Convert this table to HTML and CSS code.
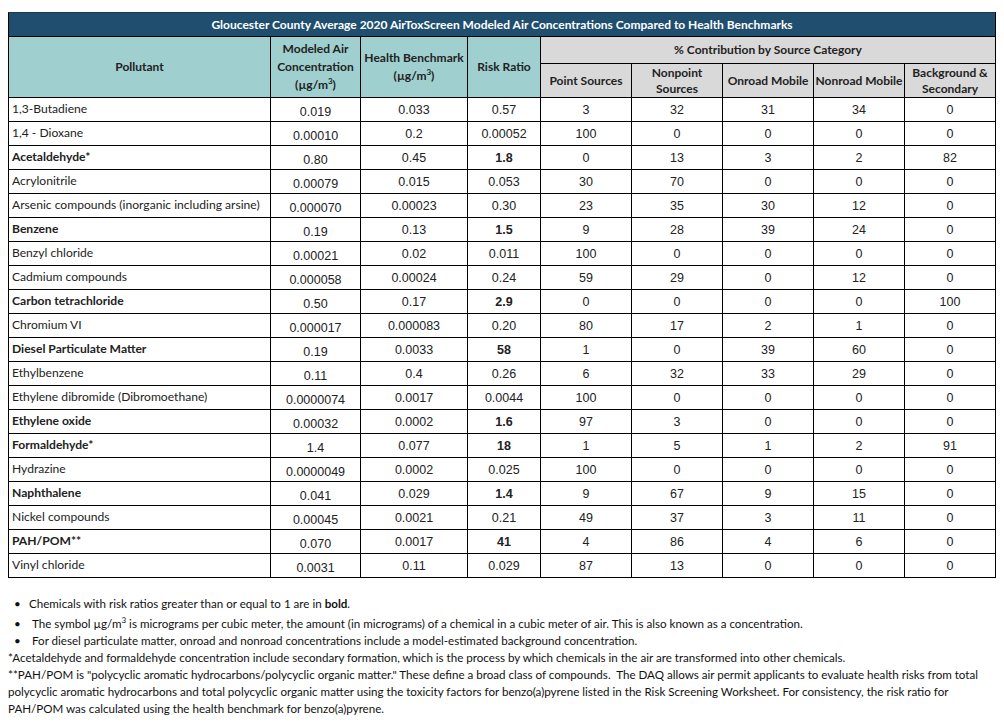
FILE: index.html
```html
<!DOCTYPE html>
<html>
<head>
<meta charset="utf-8">
<link rel="stylesheet" href="styles.css">
</head>
<body>
<table class="tox">
  <colgroup>
    <col class="c-name"><col class="c-mod"><col class="c-hb"><col class="c-rr">
    <col class="c-pct"><col class="c-pct"><col class="c-pct"><col class="c-pct"><col class="c-pct">
  </colgroup>
  <thead>
    <tr class="title-row"><th colspan="9">Gloucester County Average 2020 AirToxScreen Modeled Air Concentrations Compared to Health Benchmarks</th></tr>
    <tr class="h1">
      <th rowspan="2" class="teal">Pollutant</th>
      <th rowspan="2" class="teal">Modeled Air<br>Concentration<br>(µg/m<sup>3</sup>)</th>
      <th rowspan="2" class="teal">Health Benchmark<br>(µg/m<sup>3</sup>)</th>
      <th rowspan="2" class="teal">Risk Ratio</th>
      <th colspan="5" class="gray">% Contribution by Source Category</th>
    </tr>
    <tr class="h2">
      <th class="gray">Point Sources</th>
      <th class="gray">Nonpoint<br>Sources</th>
      <th class="gray">Onroad Mobile</th>
      <th class="gray">Nonroad Mobile</th>
      <th class="gray">Background &amp;<br>Secondary</th>
    </tr>
  </thead>
  <tbody>
    <tr><td class="name">1,3-Butadiene</td><td class="mod">0.019</td><td class="num">0.033</td><td class="num">0.57</td><td class="num">3</td><td class="num">32</td><td class="num">31</td><td class="num">34</td><td class="num">0</td></tr>
    <tr><td class="name">1,4 - Dioxane</td><td class="mod">0.00010</td><td class="num">0.2</td><td class="num">0.00052</td><td class="num">100</td><td class="num">0</td><td class="num">0</td><td class="num">0</td><td class="num">0</td></tr>
    <tr class="hi"><td class="name">Acetaldehyde*</td><td class="mod">0.80</td><td class="num">0.45</td><td class="num rr">1.8</td><td class="num">0</td><td class="num">13</td><td class="num">3</td><td class="num">2</td><td class="num">82</td></tr>
    <tr><td class="name">Acrylonitrile</td><td class="mod">0.00079</td><td class="num">0.015</td><td class="num">0.053</td><td class="num">30</td><td class="num">70</td><td class="num">0</td><td class="num">0</td><td class="num">0</td></tr>
    <tr><td class="name">Arsenic compounds (inorganic including arsine)</td><td class="mod">0.000070</td><td class="num">0.00023</td><td class="num">0.30</td><td class="num">23</td><td class="num">35</td><td class="num">30</td><td class="num">12</td><td class="num">0</td></tr>
    <tr class="hi"><td class="name">Benzene</td><td class="mod">0.19</td><td class="num">0.13</td><td class="num rr">1.5</td><td class="num">9</td><td class="num">28</td><td class="num">39</td><td class="num">24</td><td class="num">0</td></tr>
    <tr><td class="name">Benzyl chloride</td><td class="mod">0.00021</td><td class="num">0.02</td><td class="num">0.011</td><td class="num">100</td><td class="num">0</td><td class="num">0</td><td class="num">0</td><td class="num">0</td></tr>
    <tr><td class="name">Cadmium compounds</td><td class="mod">0.000058</td><td class="num">0.00024</td><td class="num">0.24</td><td class="num">59</td><td class="num">29</td><td class="num">0</td><td class="num">12</td><td class="num">0</td></tr>
    <tr class="hi"><td class="name">Carbon tetrachloride</td><td class="mod">0.50</td><td class="num">0.17</td><td class="num rr">2.9</td><td class="num">0</td><td class="num">0</td><td class="num">0</td><td class="num">0</td><td class="num">100</td></tr>
    <tr><td class="name">Chromium VI</td><td class="mod">0.000017</td><td class="num">0.000083</td><td class="num">0.20</td><td class="num">80</td><td class="num">17</td><td class="num">2</td><td class="num">1</td><td class="num">0</td></tr>
    <tr class="hi"><td class="name">Diesel Particulate Matter</td><td class="mod">0.19</td><td class="num">0.0033</td><td class="num rr">58</td><td class="num">1</td><td class="num">0</td><td class="num">39</td><td class="num">60</td><td class="num">0</td></tr>
    <tr><td class="name">Ethylbenzene</td><td class="mod">0.11</td><td class="num">0.4</td><td class="num">0.26</td><td class="num">6</td><td class="num">32</td><td class="num">33</td><td class="num">29</td><td class="num">0</td></tr>
    <tr><td class="name">Ethylene dibromide (Dibromoethane)</td><td class="mod">0.0000074</td><td class="num">0.0017</td><td class="num">0.0044</td><td class="num">100</td><td class="num">0</td><td class="num">0</td><td class="num">0</td><td class="num">0</td></tr>
    <tr class="hi"><td class="name">Ethylene oxide</td><td class="mod">0.00032</td><td class="num">0.0002</td><td class="num rr">1.6</td><td class="num">97</td><td class="num">3</td><td class="num">0</td><td class="num">0</td><td class="num">0</td></tr>
    <tr class="hi"><td class="name">Formaldehyde*</td><td class="mod">1.4</td><td class="num">0.077</td><td class="num rr">18</td><td class="num">1</td><td class="num">5</td><td class="num">1</td><td class="num">2</td><td class="num">91</td></tr>
    <tr><td class="name">Hydrazine</td><td class="mod">0.0000049</td><td class="num">0.0002</td><td class="num">0.025</td><td class="num">100</td><td class="num">0</td><td class="num">0</td><td class="num">0</td><td class="num">0</td></tr>
    <tr class="hi"><td class="name">Naphthalene</td><td class="mod">0.041</td><td class="num">0.029</td><td class="num rr">1.4</td><td class="num">9</td><td class="num">67</td><td class="num">9</td><td class="num">15</td><td class="num">0</td></tr>
    <tr><td class="name">Nickel compounds</td><td class="mod">0.00045</td><td class="num">0.0021</td><td class="num">0.21</td><td class="num">49</td><td class="num">37</td><td class="num">3</td><td class="num">11</td><td class="num">0</td></tr>
    <tr class="hi"><td class="name">PAH/POM**</td><td class="mod">0.070</td><td class="num">0.0017</td><td class="num rr">41</td><td class="num">4</td><td class="num">86</td><td class="num">4</td><td class="num">6</td><td class="num">0</td></tr>
    <tr><td class="name">Vinyl chloride</td><td class="mod">0.0031</td><td class="num">0.11</td><td class="num">0.029</td><td class="num">87</td><td class="num">13</td><td class="num">0</td><td class="num">0</td><td class="num">0</td></tr>
  </tbody>
</table>

<div class="notes">
  <ul class="bullets">
    <li class="b1">Chemicals with risk ratios greater than or equal to 1 are in <b>bold</b>.</li>
    <li class="b2">The symbol µg/m<sup>3</sup> is micrograms per cubic meter, the amount (in micrograms) of a chemical in a cubic meter of air. This is also known as a concentration.</li>
    <li class="b3">For diesel particulate matter, onroad and nonroad concentrations include a model-estimated background concentration.</li>
  </ul>
  <p>*Acetaldehyde and formaldehyde concentration include secondary formation, which is the process by which chemicals in the air are transformed into other chemicals.</p>
  <p>**PAH/POM is "polycyclic aromatic hydrocarbons/polycyclic organic matter." These define a broad class of compounds.&nbsp; The DAQ allows air permit applicants to evaluate health risks from total polycyclic aromatic hydrocarbons and total polycyclic organic matter using the toxicity factors for benzo(a)pyrene listed in the Risk Screening Worksheet. For consistency, the risk ratio for PAH/POM was calculated using the health benchmark for benzo(a)pyrene.</p>
</div>
</body>
</html>
```

FILE: styles.css
```css
html, body {
  margin: 0;
  padding: 0;
  background: #ffffff;
}
body {
  padding: 12px 0 0 8px;
  font-family: "Lato", "Noto Sans", sans-serif;
  color: #111;
}
.tox {
  border-collapse: collapse;
  table-layout: fixed;
  width: 986px;
}
.c-name { width: 262px; }
.c-mod { width: 90px; }
.c-hb { width: 107px; }
.c-rr { width: 73px; }
.c-pct { width: 91px; }
.tox th, .tox td {
  border: 1px solid #000;
  padding: 0;
}
.title-row { height: 24px; }
.title-row th {
  background: #1f4e6f;
  color: #fff;
  font-size: 12px;
  line-height: 14px;
  font-weight: 700;
  text-align: center;
  border-color: #1a3a52 #000 #000 #000;
}
.h1 th, .h2 th {
  font-size: 12px;
  font-weight: 700;
  color: #222;
  line-height: 18px;
  text-align: center;
  white-space: nowrap;
}
.h1 { height: 27px; }
.h2 { height: 34px; }
.h2 th { line-height: 16px; padding-top: 1px; }
.teal { background: #9fcfcf; }
.gray { background: #d9d9d9; }
th sup, .notes sup {
  font-size: 8px;
  line-height: 0;
  vertical-align: 5px;
}
.tox tbody tr { height: 24px; }
.tox td {
  font-size: 12.5px;
  line-height: 15px;
}
.name {
  padding-left: 3px !important;
  padding-bottom: 2px !important;
  vertical-align: middle;
  font-family: "Lato", "Noto Sans", sans-serif;
  font-size: 12.1px !important;
  color: #222;
  white-space: nowrap;
}
.hi .name { font-weight: 700; }
.mod, .num {
  font-family: "Liberation Sans", Arial, sans-serif;
  text-align: center;
  color: #222;
}
.mod {
  vertical-align: bottom;
  padding-bottom: 1px !important;
}
.num {
  vertical-align: middle;
  padding-top: 1px !important;
}
.rr { font-weight: 700; }
.notes {
  margin-top: 17px;
  font-size: 11.6px;
  line-height: 17px;
  color: #111;
  width: 986px;
}
.bullets {
  list-style: none;
  margin: 0;
  padding: 0;
}
.bullets li {
  position: relative;
  padding-left: 21px;
}
.bullets li::before {
  content: "•";
  position: absolute;
  left: 6px;
  top: 0;
}
.bullets .b2, .bullets .b3 { padding-left: 24px; }
.bullets .b2 { margin-top: 3px; }
.notes p {
  margin: 0;
}
```
